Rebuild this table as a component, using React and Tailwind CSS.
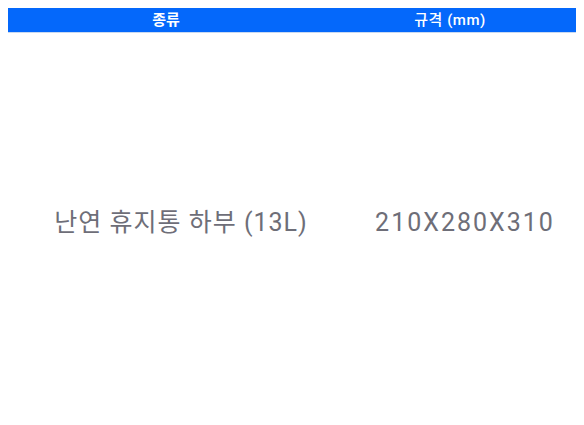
import React from "react";

const font = { fontFamily: 'Roboto, "Noto Sans CJK KR", sans-serif' };

export default function App() {
    return (
        <div className="w-[584px] h-[425px] bg-white px-2 pt-2" style={font}>
            <div className="flex h-[25px] bg-[#0468fb] text-white text-[15px] border-b border-[#c9d9f0]">
                <div className="w-[316px] flex items-center justify-center font-bold">종류</div>
                <div className="flex-1 flex items-center justify-center font-medium tracking-[0.5px]">규격 (mm)</div>
            </div>
            <div className="flex h-[380px] text-[#6e6e78] text-[25px]">
                <div className="w-[346px] flex items-center justify-center tracking-[1px]">난연 휴지통 하부 (13L)</div>
                <div className="flex-1 flex items-center justify-center tracking-[2px]">210X280X310</div>
            </div>
        </div>
    );
}
